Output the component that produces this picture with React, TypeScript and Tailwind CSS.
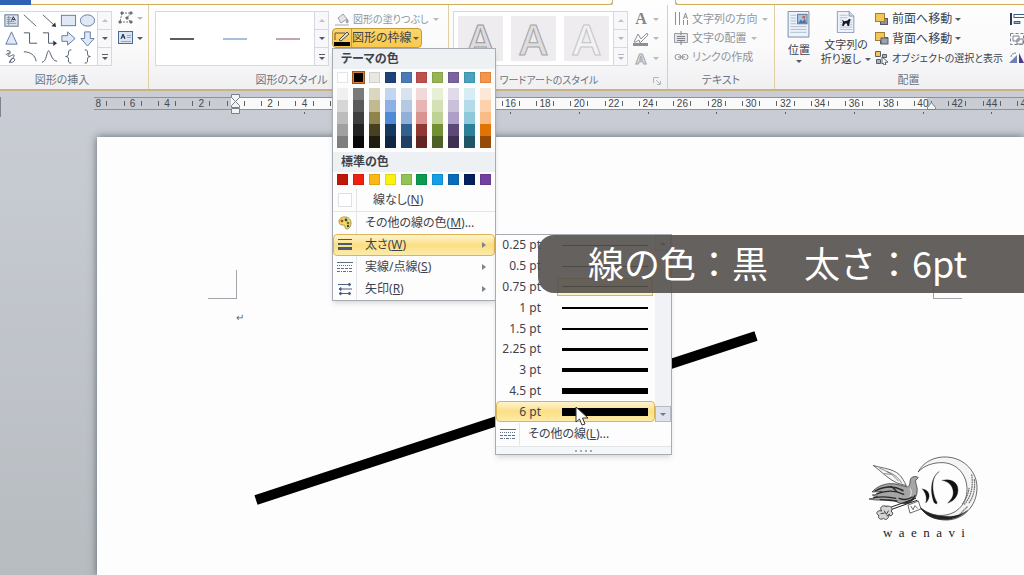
import React, { useState } from 'react';

const shapeIcons: { name: string; art: React.ReactNode }[] = [
  { name: 'テキスト ボックス', art: <><rect x="2" y="3" width="14" height="12" fill="#dfe6ef" stroke="#5b6f8c" /><path d="M4 6h5M4 8h4M4 10h8M4 12h10M6 4v10" stroke="#8193aa" /><path d="M9 9l2-4 2 4M10 8h3" stroke="#1f2f4a" /></> },
  { name: '直線', art: <path d="M2 3l13 12" stroke="#56606e" /> },
  { name: '矢印', art: <><path d="M2 3l12 11" stroke="#56606e" /><path d="M16 16l-5-1 4-4z" fill="#2c3745" /></> },
  { name: '正方形/長方形', art: <rect x="1.500" y="3.500" width="15" height="11" fill="#dfe8f4" stroke="#6079a3" /> },
  { name: '円/楕円', art: <ellipse cx="9" cy="9" rx="7.500" ry="6" fill="#dfe8f4" stroke="#6079a3" /> },
  { name: '二等辺三角形', art: <path d="M9 2l6 13H3z" fill="#dfe8f4" stroke="#6079a3" /> },
  { name: 'カギ線コネクタ', art: <path d="M2 3h6v11h8" stroke="#475468" /> },
  { name: 'カギ線矢印コネクタ', art: <><path d="M2 3h6v11h6" stroke="#475468" /><path d="M17 14l-4-3v6z" fill="#2c3745" /></> },
  { name: '右矢印', art: <path d="M2 6h6V2l8 7-8 7v-4H2z" fill="#dfe8f4" stroke="#6079a3" /> },
  { name: '下矢印', art: <path d="M6 2v7H2l7 8 7-8h-4V2z" fill="#dfe8f4" stroke="#6079a3" /> },
  { name: 'フリーハンド', art: <path d="M4 3c5-1 4 3 2 4s0 3 3 1 4 0 1 3-3 5 0 4 3-4 1-4-4 2-4 5M3 7l4-2" stroke="#475468" /> },
  { name: '円弧', art: <path d="M2 4c7 0 12 4 13 10" stroke="#475468" /> },
  { name: '曲線', art: <path d="M1 15C6 15 6 3 8 3s3 11 9 11" stroke="#475468" /> },
  { name: '左中かっこ', art: <path d="M12 2c-3 0-3 1-3 4 0 2-1 3-3 3 2 0 3 1 3 3 0 3 0 4 3 4" stroke="#475468" /> },
  { name: '右中かっこ', art: <path d="M6 2c3 0 3 1 3 4 0 2 1 3 3 3-2 0-3 1-3 3 0 3 0 4-3 4" stroke="#475468" /> },
];

const themeColors = [
  { base: '#ffffff', tints: ['#f0f0f0', '#d6d6d6', '#bcbcbc', '#a0a0a0', '#7e7e7e'] },
  { base: '#000000', tints: ['#7a7a7a', '#5a5a5a', '#3e3e3e', '#222222', '#080808'] },
  { base: '#e8e7e0', tints: ['#dbd6bf', '#c1ba91', '#8f8449', '#48411f', '#1f1b10'] },
  { base: '#1d437d', tints: ['#c3d6f0', '#8db1e6', '#5089d6', '#15365f', '#0e2644'] },
  { base: '#4a7ab8', tints: ['#d8e3f0', '#b6c9e3', '#90b0d8', '#31608f', '#213f63'] },
  { base: '#bf504c', tints: ['#f1d9d9', '#e6b6b4', '#d99492', '#923833', '#632523'] },
  { base: '#97b653', tints: ['#e8efd7', '#d4e1b5', '#bdd293', '#728f36', '#4d6126'] },
  { base: '#7c62a0', tints: ['#e0dae9', '#cac0da', '#ae9fc8', '#5c4879', '#3e3051'] },
  { base: '#47a3bf', tints: ['#d7ecf3', '#b4dbe8', '#8ec9db', '#2e8099', '#205664'] },
  { base: '#f7964a', tints: ['#fde7d5', '#fbd1ae', '#f9bc86', '#e07306', '#954a08'] },
];

const standardColors = ['#c01808', '#f02010', '#fcb714', '#fbf10c', '#92c353', '#0a9a50', '#12a0e8', '#0b6bb8', '#04205e', '#7240a0'];

const weights = [
  { label: '0.25 pt', px: 1 },
  { label: '0.5 pt', px: 1 },
  { label: '0.75 pt', px: 1 },
  { label: '1 pt', px: 2 },
  { label: '1.5 pt', px: 2 },
  { label: '2.25 pt', px: 3 },
  { label: '3 pt', px: 4 },
  { label: '4.5 pt', px: 6 },
  { label: '6 pt', px: 8 },
];

// ruler runs from -8 to 46 characters, two per cell
const rulerMarks = Array.from({ length: 28 }, (_, i) => i * 2 - 8);

const Caret = ({ className = 'text-[#555b66]' }: { className?: string }) => (
  <svg viewBox="0 0 6 3" className={`h-[3px] w-[6px] shrink-0 ${className}`}>
    <path d="M0 0h6L3 3z" fill="currentColor" />
  </svg>
);

const GalleryScroll = ({ faded = false }: { faded?: boolean }) => (
  <div className="flex w-[14px] shrink-0 flex-col divide-y divide-[#d5d8de] border-l border-[#d5d8de] bg-[#f8f8fa]">
    <button aria-label="上へ" className="flex flex-1 items-center justify-center">
      <Caret className="rotate-180 text-[#bfc2c8]" />
    </button>
    <button aria-label="下へ" className="flex flex-1 items-center justify-center">
      <Caret className={faded ? 'text-[#b5b8be]' : 'text-[#555b66]'} />
    </button>
    <button aria-label="その他" className="flex flex-1 flex-col items-center justify-center gap-[2px]">
      <span className={`h-px w-[6px] ${faded ? 'bg-[#b5b8be]' : 'bg-[#555b66]'}`} />
      <Caret className={faded ? 'text-[#b5b8be]' : 'text-[#555b66]'} />
    </button>
  </div>
);

interface GroupProps {
  label: string;
  className?: string;
  labelClass?: string;
  launcher?: boolean;
  children: React.ReactNode;
}

const Group = ({ label, className = '', labelClass = 'text-[11px]', launcher, children }: GroupProps) => (
  <section className={`flex flex-col border-[#e0cfa4] pt-[6px] ${className}`}>
    <div className="flex h-[55px]">{children}</div>
    <div className="flex flex-1 items-center pt-[6px] text-[#6d7380]">
      <h2 className={`flex-1 text-center ${labelClass}`}>{label}</h2>
      {launcher && (
        <button aria-label={`${label}の詳細`} className="mr-[6px]">
          <svg viewBox="0 0 8 8" className="h-2 w-2" fill="none" stroke="#b3b6bc">
            <path d="M.5 6V.5H6M3 3l4 4M7.500 4v3.500H4" />
          </svg>
        </button>
      )}
    </div>
  </section>
);

const Swatch = ({ color, selected = false }: { color: string; selected?: boolean }) => (
  <button
    aria-label={color}
    className={`h-[11px] w-[11px] border ${selected ? 'border-[#e07a30] outline outline-[#a05018]' : 'border-black/10'}`}
    style={{ backgroundColor: color }}
  />
);

const DashIcon = () => (
  <svg viewBox="0 0 16 12" className="h-3 w-4" stroke="#5f7083" fill="none">
    <path d="M0 1.500h16" />
    <path d="M0 4.500h16" strokeDasharray="1 1" />
    <path d="M0 7.500h16" strokeDasharray="3 1" />
    <path d="M0 10.500h16" strokeDasharray="3 1 1 1" />
  </svg>
);

interface MenuItemProps {
  icon: React.ReactNode;
  text: string;
  accessKey: string;
  tail?: string;
  submenu?: boolean;
  active?: boolean;
  indent?: boolean;
}

const MenuItem = ({ icon, text, accessKey, tail = '', submenu, active, indent }: MenuItemProps) => (
  <button
    role="menuitem"
    className={`flex h-[22px] w-full items-center rounded-sm border pr-2 text-left text-[12px] ${
      active ? 'border-[#dcb454] bg-linear-to-b from-[#fdf3cf] via-[#fbdf84] to-[#fdebaa]' : 'border-transparent'
    }`}
  >
    <span className="flex w-[22px] shrink-0 justify-center">{icon}</span>
    <span className={`flex-1 border-l py-[2px] whitespace-nowrap ${active ? 'border-transparent' : 'border-[#e3e5e9]'} ${indent ? 'pl-4' : 'pl-2'}`}>
      {text}(<u>{accessKey}</u>){tail}
    </span>
    {submenu && (
      <svg viewBox="0 0 4 6" className="h-[6px] w-1">
        <path d="M0 0l4 3-4 3z" fill="#7d828b" />
      </svg>
    )}
  </button>
);

const WeightMenu = () => {
  const [current, setCurrent] = useState('6 pt');

  return (
    <div role="menu" className="absolute top-0 left-full w-[177px] border border-[#a7abb3] bg-[#fdfdfd] shadow-md">
      <div className="flex h-[187px]">
        <div className="flex flex-1 flex-col">
          {weights.map((w) => (
            <button
              key={w.label}
              onClick={() => setCurrent(w.label)}
              className={`flex flex-1 items-center rounded-sm border pr-px text-[12px] ${
                current === w.label ? 'border-[#dcb454] bg-linear-to-b from-[#fdf3cf] via-[#fbdf84] to-[#fdebaa]' : 'border-transparent'
              }`}
            >
              <span className="w-11 text-right whitespace-nowrap">{w.label}</span>
              <span
                className={`ml-4 flex flex-1 items-center self-stretch border px-1 ${
                  w.label === '0.75 pt' ? 'border-[#dcb454] bg-[#fdf0c0]' : 'border-transparent'
                }`}
              >
                <span className="w-full bg-black" style={{ height: w.px }} />
              </span>
            </button>
          ))}
        </div>
        <div className="flex w-4 flex-col justify-between bg-[#f1f2f5]">
          <button aria-label="上へスクロール" className="flex h-4 items-center justify-center border border-[#c3c7ce]">
            <Caret className="rotate-180" />
          </button>
          <button aria-label="下へスクロール" className="flex h-4 items-center justify-center border border-[#b5bac4] bg-[#dfe4ec]">
            <Caret className="text-[#6b7a94]" />
          </button>
        </div>
      </div>
      <div className="py-px">
        <MenuItem icon={<DashIcon />} text="その他の線" accessKey="L" tail="..." />
      </div>
      <div className="flex h-2 items-center justify-center gap-[3px] border-t border-[#e3e5e9] bg-[#f5f6f8]">
        {[0, 1, 2, 3].map((n) => (
          <span key={n} className="h-[2px] w-[2px] bg-[#a4a9b2]" />
        ))}
      </div>
    </div>
  );
};

const OutlineMenu = () => (
  <div role="menu" className="absolute top-full left-0 z-20 w-[164px] border border-[#a7abb3] bg-[#fdfdfd] text-[#3d434d] shadow-md">
    <h3 className="h-5 bg-[#eef1f4] pl-2 text-[12px] leading-5 font-bold">テーマの色</h3>
    <div className="flex justify-between px-1 py-[3px]">
      {themeColors.map((c, i) => (
        <Swatch key={c.base} color={c.base} selected={i === 1} />
      ))}
    </div>
    <div className="flex justify-between px-1 pt-[2px] pb-1">
      {themeColors.map((c) => (
        <div key={c.base} className="flex w-[11px] flex-col">
          {c.tints.map((t) => (
            <button key={t} aria-label={t} className="h-3" style={{ backgroundColor: t }} />
          ))}
        </div>
      ))}
    </div>
    <h3 className="h-5 bg-[#eef1f4] pl-2 text-[12px] leading-5 font-bold">標準の色</h3>
    <div className="flex justify-between px-1 pt-[2px] pb-1">
      {standardColors.map((c) => (
        <Swatch key={c} color={c} />
      ))}
    </div>
    <MenuItem icon={<span className="h-[14px] w-[14px] border border-[#dcdfe4] bg-white" />} text="線なし" accessKey="N" indent />
    <div className="border-t border-[#e3e5e9]" />
    <MenuItem
      icon={
        <svg viewBox="0 0 14 14" className="h-[14px] w-[14px]">
          <path d="M7 1c4 0 6 3 6 6s-2 6-4 6-2-2-2-3-1-1-3-1-3-2-3-4 2-4 6-4z" fill="#f3dc6a" stroke="#a8913a" />
          <circle cx="4" cy="5" r="1.400" fill="#b8452a" />
          <circle cx="8" cy="4" r="1.400" fill="#3c4250" />
          <circle cx="10" cy="7" r="1.300" fill="#4f7a3a" />
          <circle cx="10" cy="10" r="1.200" fill="#3c4250" />
        </svg>
      }
      text="その他の線の色"
      accessKey="M"
      tail="..."
    />
    <div className="relative">
      <MenuItem
        active
        submenu
        icon={
          <svg viewBox="0 0 14 12" className="h-3 w-[14px]" fill="#4a5a6e">
            <path d="M0 0h14v1H0zM0 4h14v2H0zM0 8h14v3H0z" />
          </svg>
        }
        text="太さ"
        accessKey="W"
      />
      <WeightMenu />
    </div>
    <MenuItem submenu icon={<DashIcon />} text="実線/点線" accessKey="S" />
    <MenuItem
      submenu
      icon={
        <svg viewBox="0 0 14 14" className="h-[14px] w-[14px]" stroke="#4a6282" fill="#4a6282">
          <path d="M0 2.500h13M1 7h13M1 11.500h12" />
          <path d="M11 1l2 1.500-2 1.500zM3 5.500L1 7l2 1.500zM3 10l-2 1.500L3 13zM11 10l2 1.500-2 1.500z" />
        </svg>
      }
      text="矢印"
      accessKey="R"
    />
  </div>
);

const PageIcon = ({ wrap = false }: { wrap?: boolean }) => (
  <svg viewBox="0 0 24 28" className="h-7 w-6" fill="none">
    <path d={wrap ? 'M1 .5h15l6 6v21H1z' : 'M.5 .5h22v27H.5z'} fill="#eef3fa" stroke="#7487a5" />
    {wrap && <path d="M16 .5v6h6" fill="#cdd9ea" stroke="#7487a5" />}
    <path d={wrap ? 'M4 5.500h10M4 8.500h10M4 11.500h3M17 11.500h3M4 14.500h3M17 14.500h3M4 17.500h3M17 17.500h3M4 20.500h16M4 23.500h16' : 'M3 4.500h6M3 7.500h6M3 10.500h6M3 13.500h6M3 16.500h17M3 19.500h17M3 22.500h17'} stroke="#a9bad2" />
    {wrap ? (
      <path d="M7 11l3 2 4-1 2-2 2 1-1 2-1 6h-2l-1-3h-2l-2 3H7l1-5z" fill="#16191f" />
    ) : (
      <>
        <rect x="10.500" y="3.500" width="10" height="10" fill="#a9c4e4" stroke="#5c7396" />
        <path d="M11 13l3-4 2 2 2-3 2 5z" fill="#56719b" />
        <circle cx="17" cy="6.500" r="1.500" fill="#d65a3c" />
      </>
    )}
  </svg>
);

const LayerIcon = ({ back = false }: { back?: boolean }) => (
  <svg viewBox="0 0 14 13" className="h-[13px] w-[14px] shrink-0">
    <rect x="5.500" y="5.500" width="7" height="6" fill="#8c93a0" stroke="#545b68" />
    <rect x=".5" y=".5" width="9" height="8" fill="#f4c658" stroke="#a27d2c" />
    {back && <rect x="6" y="6" width="7" height="6" fill="#9aa1ad" stroke="#545b68" />}
  </svg>
);

const Ribbon = () => (
  <header className="text-[#3d434d]">
    <div className="flex h-[5px]">
      <div className="w-[31px] shrink-0 bg-[#2f62b4]" />
      <div className="w-[582px] shrink-0 rounded-br-sm border-r border-b border-[#cfab5c] bg-[#fdfbf5]" />
      <div className="w-[62px] shrink-0 bg-[#fefefe]" />
      <div className="flex-1 rounded-bl-sm border-b border-l border-[#cfab5c] bg-[#fdfbf5]" />
    </div>
    <div className="flex h-[86px] border-b-2 border-[#cbb283] bg-linear-to-b from-[#fefefe] via-[#fafafb] to-[#f0f0f2]">
      <Group label="図形の挿入" className="w-[149px] shrink-0 border-r" labelClass="pr-6 text-[11px]">
        <div className="flex w-[112px] border border-l-0 border-[#d5d8de] bg-white">
          <div className="grid flex-1 grid-cols-5 pl-[2px]">
            {shapeIcons.map((s) => (
              <button key={s.name} aria-label={s.name} className="flex items-center justify-center">
                <svg viewBox="0 0 18 18" className="h-[17px] w-[17px]" fill="none">
                  {s.art}
                </svg>
              </button>
            ))}
          </div>
          <GalleryScroll />
        </div>
        <div className="flex flex-col gap-[6px] pl-[6px]">
          <button aria-label="図形の編集" className="flex items-center gap-[3px]">
            <svg viewBox="0 0 16 14" className="h-[14px] w-4" fill="none" stroke="#707680">
              <path d="M4 2h9L9 7l4 4H2z" strokeDasharray="2 1" />
              <path d="M3 1h2v2H3zM12 1h2v2h-2zM8 6h2v2H8zM12 10h2v2h-2zM1 10h2v2H1z" fill="#555" />
            </svg>
            <Caret className="text-[#b5b8be]" />
          </button>
          <button aria-label="横書きテキスト ボックス" className="flex items-center gap-[3px]">
            <svg viewBox="0 0 16 14" className="h-[14px] w-4" fill="none">
              <rect x=".5" y=".5" width="14" height="12" fill="#dce6f3" stroke="#4d6a96" />
              <path d="M3 8l2-5 2 5M4 6h3" stroke="#1b2c49" />
              <path d="M9 4.500h4M9 6.500h4M3 10.500h10" stroke="#92a8c8" />
            </svg>
            <Caret />
          </button>
        </div>
      </Group>

      <Group label="図形のスタイル" className="w-[300px] shrink-0 border-r pl-[6px]" labelClass="pr-5 text-[11px]">
        <div className="flex w-[174px] shrink-0 border border-[#d5d8de] bg-white">
          <div className="grid flex-1 grid-cols-3">
            <button aria-label="スタイル 1" className="flex items-center justify-center"><span className="h-[2px] w-6 bg-[#5c5c5c]" /></button>
            <button aria-label="スタイル 2" className="flex items-center justify-center"><span className="h-[2px] w-6 bg-[#a9bedd]" /></button>
            <button aria-label="スタイル 3" className="flex items-center justify-center"><span className="h-[2px] w-6 bg-[#c6a5a8]" /></button>
          </div>
          <GalleryScroll />
        </div>
        <div className="flex flex-col pl-[3px] text-[12px]">
          <button className="flex h-[17px] items-center gap-1 pl-[3px] text-[10px] whitespace-nowrap text-[#8f949c]">
            <svg viewBox="0 0 14 14" className="h-[14px] w-[14px]" fill="#e4e5e8" stroke="#9a9ea6">
              <path d="M3 5l5-4 4 5-6 4z" />
              <path d="M12 6c2 2 1 4 0 4s-1-2 0-4z" fill="#9a9ea6" />
              <path d="M0 11h14v2H0z" stroke="none" fill="#d0d2d6" />
            </svg>
            図形の塗りつぶし
            <Caret className="ml-px text-[#b5b8be]" />
          </button>
          <div className="relative">
            <button className="flex h-5 w-[90px] items-center rounded-sm border border-[#c39a3c] bg-linear-to-b from-[#fbd56c] to-[#fbc94a] whitespace-nowrap">
              <span className="flex h-full w-[19px] shrink-0 items-center justify-center border-r border-[#c39a3c]">
                <svg viewBox="0 0 16 16" className="h-4 w-4" fill="none">
                  <path d="M11 3H1v7" stroke="#5a5648" />
                  <path d="M5 10l8-8 2 2-8 7z" fill="#e9e2cc" stroke="#4a4a4a" />
                  <path d="M0 12h16v4H0z" fill="#000" />
                </svg>
              </span>
              図形の枠線
              <span className="flex flex-1 justify-center"><Caret /></span>
            </button>
            <OutlineMenu />
          </div>
        </div>
      </Group>

      <Group label="ワードアートのスタイル" className="w-[219px] shrink-0 border-r pl-1" labelClass="pr-2 text-[10px]" launcher>
        <div className="flex w-[175px] border border-[#d5d8de] bg-white">
          <div className="flex flex-1 items-center justify-around">
            <button className="h-[45px] w-[45px] bg-[#eeecef] font-['Open_Sans',sans-serif] text-[42px] leading-[46px] font-semibold text-[#dcdcdf] [-webkit-text-stroke:1px_#98989c]">A</button>
            <button className="h-[45px] w-[45px] bg-[#eeecef] font-['Open_Sans',sans-serif] text-[42px] leading-[46px] font-semibold text-[#dedee0] [-webkit-text-stroke:1px_#a4a4a8]">A</button>
            <button className="h-[45px] w-[45px] bg-[#eeecef] font-['Open_Sans',sans-serif] text-[42px] leading-[46px] font-semibold text-[#f3f2f4] [-webkit-text-stroke:1px_#c4c4c8]">A</button>
          </div>
          <GalleryScroll faded />
        </div>
        <div className="flex flex-col justify-between pl-[5px] text-[#8f949c]">
          <button aria-label="文字の塗りつぶし" className="flex h-4 items-center gap-1">
            <span className="w-4 text-center font-['Liberation_Serif',serif] text-[16px] leading-4 font-bold text-[#83868c]">A</span>
            <Caret className="text-[#b5b8be]" />
          </button>
          <button aria-label="文字の輪郭" className="flex h-4 items-center gap-1">
            <svg viewBox="0 0 16 16" className="h-4 w-4" fill="none" stroke="#8c9096">
              <path d="M1 11l4-8 3 5 6-6 1 2-8 8-1-3-3 2z" />
              <path d="M0 12h15v3H0z" fill="#8c9096" stroke="none" />
            </svg>
            <Caret className="text-[#b5b8be]" />
          </button>
          <button aria-label="文字の効果" className="flex h-4 items-center gap-1">
            <span className="w-4 text-center text-[15px] leading-4 font-bold text-[#e6e6e8] [-webkit-text-stroke:1px_#a4a7ad]">A</span>
            <Caret className="text-[#b5b8be]" />
          </button>
        </div>
      </Group>

      <Group label="テキスト" className="w-[107px] shrink-0 border-r pl-[6px]" labelClass="pr-[6px] text-[11px]">
        <div className="flex flex-col justify-between pb-px text-[11px] whitespace-nowrap text-[#8f949c]">
          <button className="flex h-4 items-center gap-[3px]">
            <svg viewBox="0 0 15 14" className="h-[14px] w-[15px]" fill="none" stroke="#8c9096">
              <path d="M1.500 0v13M5.500 0v13M9.500 8v5M13.500 8v5M9.500 7l2-6 2 6M10 5h3" />
            </svg>
            文字列の方向
            <Caret className="ml-px text-[#b5b8be]" />
          </button>
          <button className="flex h-4 items-center gap-[3px]">
            <svg viewBox="0 0 15 14" className="h-[14px] w-[15px]" fill="none" stroke="#9a9ea4">
              <path d="M.5 2.500h13v9H.5z" fill="#e3e4e7" />
              <path d="M3 5.500h8M3 7.500h8M3 9.500h8M7 0v4M7 10v4" stroke="#7d8187" />
            </svg>
            文字の配置
            <Caret className="ml-px text-[#b5b8be]" />
          </button>
          <button className="flex h-4 items-center gap-[3px]">
            <svg viewBox="0 0 15 8" className="h-2 w-[15px]" fill="none" stroke="#8c9096">
              <rect x="1" y="1.500" width="6" height="5" rx="2.500" />
              <rect x="8" y="1.500" width="6" height="5" rx="2.500" />
              <path d="M4 4h7" />
            </svg>
            リンクの作成
          </button>
        </div>
      </Group>

      <Group label="配置" className="min-w-0 flex-1 overflow-hidden pl-[6px]" labelClass="pl-3 text-[11px]">
        <button className="flex w-9 shrink-0 flex-col items-center text-[11px] leading-[14px]">
          <PageIcon />
          <span className="pt-[5px]">位置</span>
          <span className="flex h-[10px] items-center"><Caret /></span>
        </button>
        <button className="flex w-[58px] shrink-0 flex-col items-center text-[11px] leading-[14px] whitespace-nowrap">
          <PageIcon wrap />
          <span className="pt-[5px]">文字列の</span>
          <span className="flex items-center gap-1">折り返し<Caret /></span>
        </button>
        <div className="flex shrink-0 flex-col justify-between text-[12px] whitespace-nowrap">
          <button className="flex h-4 items-center gap-[3px]"><LayerIcon />前面へ移動<Caret /></button>
          <button className="flex h-4 items-center gap-[3px]"><LayerIcon back />背面へ移動<Caret /></button>
          <button className="flex h-4 items-center gap-[3px] text-[10px]">
            <svg viewBox="0 0 14 14" className="h-[14px] w-[14px]" stroke="#5a6069">
              <path d="M.5 .5h5v5h-5z" fill="#f4c658" />
              <path d="M1.500 8.500h4v4h-4zM7.500 3.500h4v3h-4z" fill="#aeb4be" />
              <path d="M7 6l6 5-3 .5 1 2-2 .5-1-2-1 1z" fill="#fff" />
            </svg>
            オブジェクトの選択と表示
          </button>
        </div>
        <div className="flex flex-1 flex-col items-end justify-between">
          <button aria-label="オブジェクトの配置" className="h-4 w-[15px]">
            <svg viewBox="0 0 15 14" className="h-[14px] w-[15px]">
              <path d="M2 1v12" stroke="#2d3a50" strokeWidth="2" />
              <path d="M5 2.500h10M5 5.500h10M5 2v4M5 9.500h6v2H5z" stroke="#3d5a8c" fill="#9fb3d4" />
            </svg>
          </button>
          <button aria-label="グループ化" className="h-4 w-[15px]">
            <svg viewBox="0 0 15 14" className="h-[14px] w-[15px]" fill="none" stroke="#7a808a">
              <path d="M1.500 1.500h13v11h-13z" strokeDasharray="3 2" />
              <path d="M4 4h6v5H4zM8 7h6v5H8z" />
            </svg>
          </button>
          <button aria-label="回転" className="h-4 w-[15px]">
            <svg viewBox="0 0 15 14" className="h-[14px] w-[15px]">
              <path d="M0 12h8V4z" fill="#6e83b0" />
              <path d="M10 12V2l5 10z" fill="#4b3d8c" />
              <path d="M2 6c0-3 3-4 5-4" stroke="#6e83b0" fill="none" />
            </svg>
          </button>
        </div>
      </Group>
    </div>
  </header>
);

const Ruler = () => (
  <div className="flex h-[46px] items-start pt-[6px]">
    <div className="h-5 w-px bg-[#7f858e]" />
    <div className="-mr-8 ml-[93px] flex flex-1">
      {rulerMarks.map((n) => (
        <div key={n} className="relative min-w-0 flex-1">
          <div className="grid h-[13px] grid-cols-4 border-y border-[#8d9299] font-['Liberation_Sans',sans-serif] text-[10px] leading-[11px] text-[#44484f]">
            <span className={`flex justify-center ${n < 0 || n > 40 ? 'bg-[#c9ccd2]' : 'bg-[#fafafa]'}`}>
              <span className="relative">{n !== 0 && Math.abs(n)}</span>
            </span>
            {[1, 2, 3].map((q) => (
              <span key={q} className={`flex items-center justify-center ${n < 0 || n >= 40 ? 'bg-[#c9ccd2]' : 'bg-[#fafafa]'}`}>
                {q !== 2 && <i className="h-[5px] w-px bg-[#5d6168]" />}
              </span>
            ))}
          </div>
          {n > 0 && n % 4 === 0 && <div className="mt-[2px] ml-1 h-[2px] w-px bg-[#5d6168]" />}
          {n === 0 && (
            <svg viewBox="0 0 10 20" className="absolute -top-[3px] left-0 h-5 w-[10px]" fill="#f3f4f6" stroke="#7a7f88">
              <path d="M.5 .5h8v3l-4 4-4-4zM4.500 7.500l4 4v2h-8v-2zM.5 14.500h8v5h-8z" />
            </svg>
          )}
          {n === 40 && (
            <svg viewBox="0 0 10 8" className="absolute top-[5px] left-2 h-2 w-[10px]" fill="#f3f4f6" stroke="#7a7f88">
              <path d="M4.500 .5l4 5v2h-8v-2z" />
            </svg>
          )}
        </div>
      ))}
    </div>
  </div>
);

const Logo = () => (
  <div className="absolute top-[308px] right-[29px] w-[140px]">
    <svg viewBox="0 0 420 240" className="h-20 w-[140px]" fill="none" stroke="#222" strokeLinecap="round">
      {/* moon */}
      <path d="M190 80C205 50 240 34 275 36c55 3 91 46 91 92 0 54-40 97-92 97-36 0-65-15-82-42 22 22 46 30 72 28 44-3 72-37 72-78 0-44-30-78-72-80-28-1-56 8-74 27z" fill="#f4f4f4" strokeWidth="2" />
      <path d="M196 188c18 28 46 38 82 36 24-2 44-12 60-28-20 14-42 20-64 18-30-1-56-8-78-26z" fill="#222" />
      <path d="M350 90c5 30 0 64-22 88M358 104c3 26-2 50-16 70M342 130c-2 18-10 34-20 48M336 186l-20 20" stroke="#777" strokeWidth="4" strokeDasharray="2 5" />
      {/* letter mark */}
      <path d="M252 80c-20 12-26 54-6 92 3 6-6 6-10-2-13-38-6-76 16-90z" fill="#111" />
      <path d="M262 106c32-8 52 12 46 38-4 16-16 26-30 30 14-12 20-26 15-42-4-14-15-22-31-26z" fill="#111" />
      <path d="M202 132c22 2 28 26 10 42 4-14 2-28-10-42z" fill="#111" />
      {/* bird */}
      <path d="M56 62c30 8 58 10 76 26 10 10 16 22 22 34l-28-8C100 102 84 84 56 62z" fill="#f6f6f6" strokeWidth="2" />
      <path d="M74 70c22 8 40 18 56 38M96 80c18 6 32 14 44 34M88 86l18 2" strokeWidth="2" stroke="#555" />
      <path d="M52 140c12-14 30-22 50-24 24-2 42 8 56 10 8-6 6-12 8-22 2-10 18-12 24-6l-8 8c-2 10 8 20 4 38-4 20-20 32-42 32-16 0-24-12-40-12-18 0-34 4-62-2 12-2 20-4 26-8-6 0-12 0-16-4 12 0 20-6 28-10z" fill="#a5a5a5" strokeWidth="2" />
      <path d="M60 138c26-14 56-16 84-2M66 146c26-10 56-10 80 2M56 158c24-4 44-4 66 2M84 128c22-6 44 0 60 10M76 164l50 4M108 124l20 18M132 160c14 6 28 4 40-4M150 174c14-2 24-10 30-22" strokeWidth="4" stroke="#2a2a2a" />
      <path d="M166 132c4 6 4 14 0 22" strokeWidth="3" stroke="#eee" />
      {/* key */}
      <path d="M98 190l84-30M102 196l84-30" strokeWidth="3" />
      <path d="M160 180l30-12 8 24-32 12zM168 184l6 10 6-12 8 8" fill="#fff" strokeWidth="2" />
      <path d="M94 184c-12-6-22 4-14 14-14-4-20 8-8 14-6 8 6 14 14 8 6 8 16 0 14-8 12 2 18-6 8-14 8-6 0-18-14-14zM88 198l6 10 6-10M78 206l10-2M96 212l8-4" fill="#d5d5d5" strokeWidth="3" stroke="#444" />
    </svg>
    <p className="flex justify-between pr-[30px] pl-7 font-['Liberation_Serif',serif] text-[13px] leading-4 text-[#222]">
      {'waenavi'.split('').map((letter, i) => (
        <span key={i}>{letter}</span>
      ))}
    </p>
  </div>
);

const DocumentPage = () => (
  <main className="relative ml-[97px] flex-1 bg-[#fdfdfd] shadow-[0_0_8px_rgba(50,60,70,0.7)]">
    <div className="flex justify-between pt-[133px] pr-[62px] pl-[111px]">
      <div className="h-[29px] w-[29px] border-r border-b border-[#a2a5aa]" />
      <div className="h-[29px] w-[29px] border-b border-l border-[#a2a5aa]" />
    </div>
    <p className="pt-[10px] pl-[139px] text-[10px] leading-4 text-[#666]">↵</p>
    <svg viewBox="0 0 510 180" className="absolute top-[193px] left-[153px] h-[180px] w-[510px]">
      <path d="M6 170L506 6" stroke="#000" strokeWidth="10" />
    </svg>
    <Logo />
  </main>
);

export default function App() {
  return (
    <div className="relative flex min-h-screen flex-col overflow-hidden bg-linear-to-b from-[#cdd0d8] to-[#b7bcc1] font-['Noto_Sans','Noto_Sans_CJK_JP',sans-serif] [font-feature-settings:'palt']">
      <Ribbon />
      <Ruler />
      <DocumentPage />

      {/* Caption bar over the document */}
      <div className="absolute top-[235px] right-0 left-[538px] z-30 flex h-[58px] items-center rounded-l-2xl bg-[#54504c]/90 pb-1 pl-[50px] font-['Noto_Sans_CJK_JP',sans-serif] text-[36px] whitespace-pre text-white [font-feature-settings:normal]">
        線の色：黒　太さ：6pt
      </div>

      {/* Mouse pointer */}
      <svg viewBox="0 0 14 20" className="absolute top-[406px] left-[575px] z-30 h-5 w-[14px]">
        <path d="M1 1v15l3.500-3 2.500 6 3-1-2.500-6H13z" fill="#fff" stroke="#333" />
      </svg>
    </div>
  );
}
